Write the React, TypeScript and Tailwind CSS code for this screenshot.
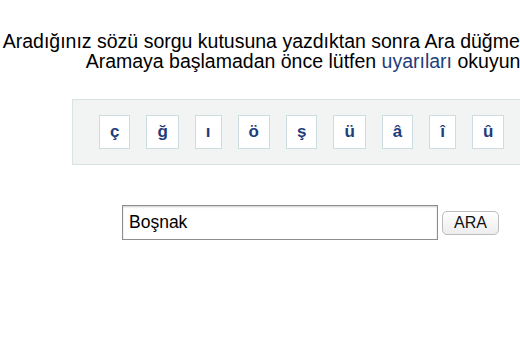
import { useState } from 'react';

const LETTERS = ['ç', 'ğ', 'ı', 'ö', 'ş', 'ü', 'â', 'î', 'û'];

export default function App() {
  const [query, setQuery] = useState('Boşnak');

  return (
    <div className="h-[338px] w-[520px] overflow-hidden bg-white font-['Liberation_Sans',Arial,sans-serif] text-black">
      <div className="ml-[-60px] w-[752px] pt-[31px] text-center">
        <p className="whitespace-nowrap text-[19.5px] leading-[20px]">
          Aradığınız sözü sorgu kutusuna yazdıktan sonra Ara düğmesine basınız.
        </p>
        <p className="whitespace-nowrap text-[19.5px] leading-[20px]">
          Aramaya başlamadan önce lütfen{' '}
          <a href="#" className="text-[#1f3d7a]">
            uyarıları
          </a>{' '}
          okuyunuz.
        </p>

        {/* special characters */}
        <div className="mx-auto mt-[28px] flex w-[488px] gap-[16px] border border-[#d9e3e4] bg-[#f2f3f3] py-[15px] pl-[26px]">
          {LETTERS.map((ch) => (
            <button
              key={ch}
              onClick={() => setQuery((q) => q + ch)}
              className="h-[34px] border border-[#cddcde] bg-white px-[10px] text-[17px] font-bold text-[#1f3d7a]"
            >
              {ch}
            </button>
          ))}
        </div>

        {/* search */}
        <div className="mt-[40px] flex items-center justify-center gap-[4px] pr-[11px]">
          <input
            value={query}
            onChange={(e) => setQuery(e.target.value)}
            className="h-[35px] w-[316px] border border-[#8e8e8e] bg-white px-[6px] text-[17.5px] text-black shadow-[inset_0_1px_2px_rgba(0,0,0,0.2)] outline-none"
          />
          <button className="h-[24px] w-[57px] rounded-[5px] border border-[#bcbcbc] bg-gradient-to-b from-white to-[#ededed] text-[16px] leading-none text-[#111]">
            ARA
          </button>
        </div>
      </div>
    </div>
  );
}
